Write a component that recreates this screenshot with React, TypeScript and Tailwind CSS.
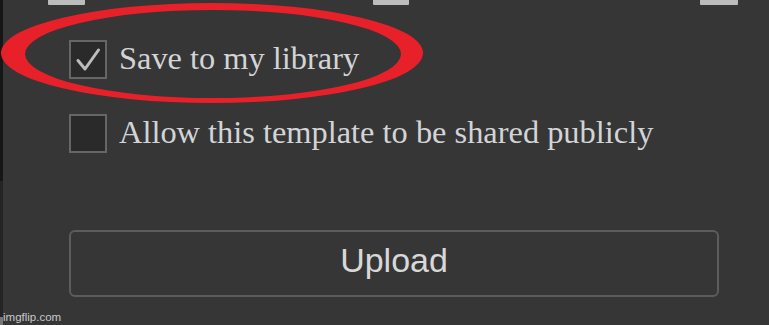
import React from "react";

function CheckBox({ checked }: { checked?: boolean }) {
  return (
    <div className="w-[38px] h-[39px] shrink-0 border-2 border-[#666666] bg-[#2a2a2a] flex items-center justify-center">
      {checked && (
        <svg width="30" height="30" viewBox="0 0 30 30" fill="none">
          <path d="M5 15.5 L12 24 L25.5 5" stroke="#bdbdbd" strokeWidth="3" strokeLinecap="round" strokeLinejoin="round" />
        </svg>
      )}
    </div>
  );
}

export default function App() {
  return (
    <div className="w-[769px] h-[325px] bg-[#363636] relative overflow-hidden flex">
      <div className="w-[3px] flex flex-col shrink-0">
        <div className="h-[181px] bg-[#161616]" />
        <div className="flex-1 bg-[#242424]" />
      </div>
      <div className="flex-1 flex flex-col">
        <div className="flex h-[5px]">
          <div className="w-[45px]" />
          <div className="w-[37px] bg-[#bcbcbc] rounded-b-[1px]" />
          <div className="w-[288px]" />
          <div className="w-[36px] bg-[#bcbcbc] rounded-b-[1px]" />
          <div className="w-[291px]" />
          <div className="w-[38px] bg-[#bcbcbc] rounded-b-[1px]" />
        </div>
        <div className="pl-[66px] flex flex-col">
          <div className="mt-[35px] flex items-center gap-[12px] h-[39px]">
            <CheckBox checked />
            <span className="text-[32.4px] leading-none text-[#d2d4d6] whitespace-nowrap pb-[2px]" style={{ fontFamily: '"Liberation Serif", "Times New Roman", serif' }}>
              Save to my library
            </span>
          </div>
          <div className="mt-[35px] flex items-center gap-[12px] h-[39px]">
            <CheckBox />
            <span className="text-[32.4px] leading-none text-[#d2d4d6] whitespace-nowrap pb-[2px]" style={{ fontFamily: '"Liberation Serif", "Times New Roman", serif' }}>
              Allow this template to be shared publicly
            </span>
          </div>
          <button className="mt-[77px] w-[650px] h-[67px] border-2 border-[#5c5c5c] rounded-[6px] bg-[#363636] flex items-center justify-center text-[34px] text-[#d8d8d8] pb-[6px]" style={{ fontFamily: '"Liberation Sans", Arial, sans-serif' }}>
            Upload
          </button>
        </div>
      </div>
      <svg className="absolute left-0 top-0 pointer-events-none" width="769" height="325" viewBox="0 0 769 325">
        <path
          fillRule="evenodd"
          fill="#e8202a"
          d="M1 53 A211 50 0 1 0 423 53 A211 50 0 1 0 1 53 Z M25 54 A188 44 0 1 1 401 54 A188 44 0 1 1 25 54 Z"
        />
      </svg>
      <div className="absolute left-[3px] bottom-[2px] text-[11.5px] leading-none text-[#c8c8c8]" style={{ fontFamily: '"Liberation Sans", Arial, sans-serif' }}>
        imgflip.com
      </div>
      <div className="absolute left-0 bottom-0 w-[3px] h-[8px] bg-[#777777]" />
    </div>
  );
}
